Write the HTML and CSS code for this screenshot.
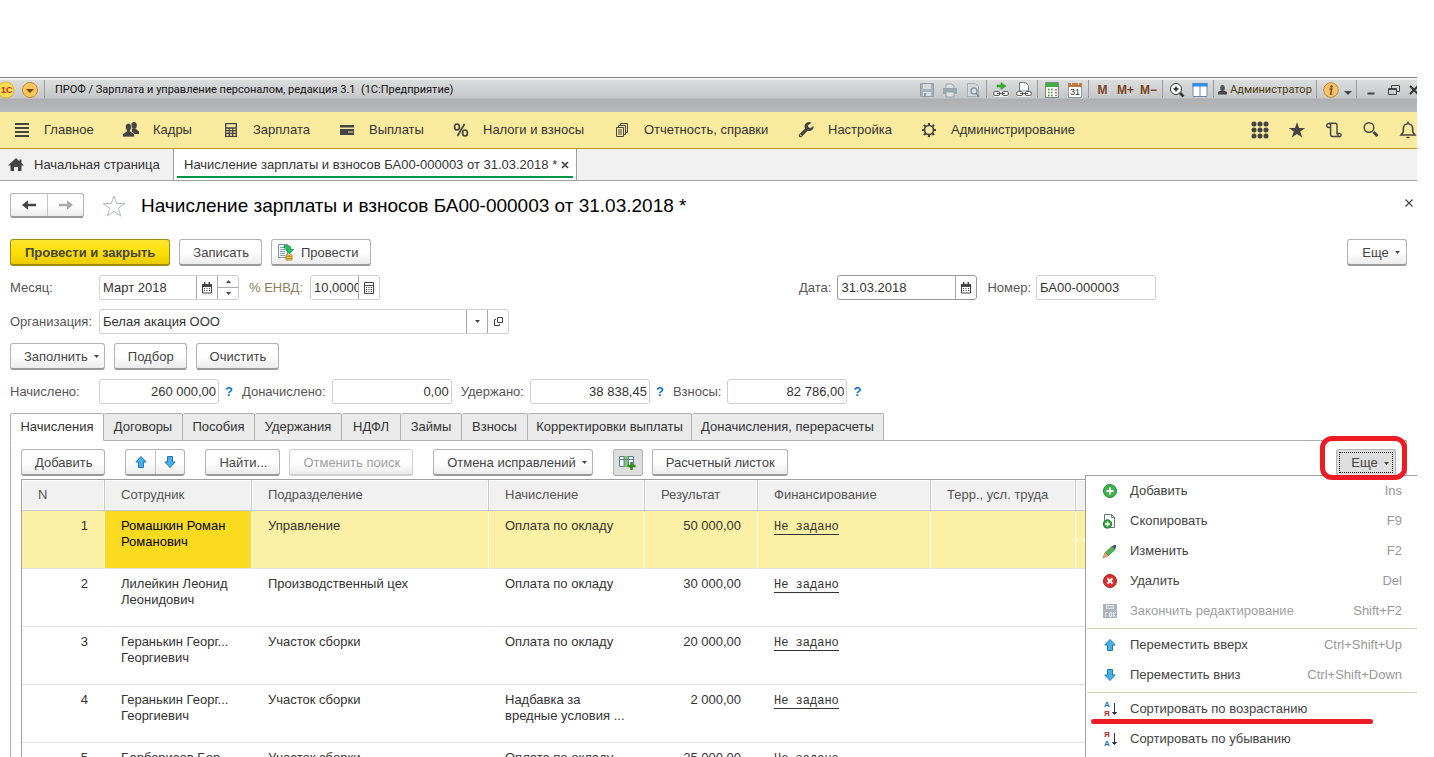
FILE: index.html
```html
<!DOCTYPE html>
<html lang="ru">

<head>
  <meta charset="UTF-8">
  <meta name="viewport" content="width=device-width, initial-scale=1.0">
  <title>Начисление зарплаты и взносов</title>
  <link rel="stylesheet" href="styles.css">
</head>

<body>
  <svg class="sprite" aria-hidden="true">
    <symbol id="up" viewBox="0 0 16 16">
      <path d="M8 2.500 13.200 8H10.500V13.500H5.500V8H2.800Z" fill="#45b0ec" stroke="#2477b0" />
    </symbol>
    <symbol id="down" viewBox="0 0 16 16">
      <path d="M8 13.500 13.200 8H10.500V2.500H5.500V8H2.800Z" fill="#45b0ec" stroke="#2477b0" />
    </symbol>
    <symbol id="calendar" viewBox="0 0 10 12">
      <path d="M.5 2.500h9v8.500h-9z" fill="#fff" stroke="#444" />
      <path d="M0 2h10v3H0zM2 0h1.500v2H2zM6.500 0H8v2H6.500z" fill="#444" />
      <path d="M2 6.500h6M2 8.500h6" stroke="#444" stroke-dasharray="1 1.500" />
    </symbol>
    <symbol id="calc" viewBox="0 0 10 12">
      <path d="M.5.5h9v11h-9zM.5 3.500h9" fill="none" stroke="#444" />
      <path d="M2 5.500h6M2 7.500h6M2 9.500h6" stroke="#444" stroke-dasharray="1.200 1.200" />
    </symbol>
    <symbol id="caret" viewBox="0 0 5 3">
      <path d="M0 0h5L2.500 3z" fill="#444" />
    </symbol>
  </svg>

  <div class="window">
    <header class="titlebar">
      <svg class="logo" width="42" height="20" viewBox="0 0 42 20">
        <circle cx="6" cy="10" r="8" fill="#ffe14d" stroke="#e0b13a" />
        <text x="1" y="13" class="logo-text">1С</text>
        <circle cx="30" cy="10" r="7.500" fill="#fbc45c" stroke="#c78a2c" />
        <path d="M26 9h8l-4 4z" fill="#6b4712" />
      </svg>
      <i class="sep"></i>
      <span class="title-text">ПРОФ / Зарплата и управление персоналом, редакция 3.1&nbsp; (1С:Предприятие)</span>
      <div class="tools">
        <button class="tool" aria-label="Сохранить"><svg width="16" height="16" viewBox="0 0 16 16"><path d="M1.500 1.500h13v13h-13z" fill="#a9b5be" stroke="#8f9ca6" /><path d="M4 2h8v5H4zM4 10h8v4H4z" fill="#d5dade" /><path d="M5 11h2v3H5z" fill="#8f9ca6" /></svg></button>
        <button class="tool" aria-label="Печать"><svg width="16" height="16" viewBox="0 0 16 16"><path d="M4 2h6l2 2v3H4z" fill="#dde1e4" stroke="#9aa6ae" /><path d="M1 6h14v6H1z" fill="#9aa8b2" /><path d="M4 10h8v5H4z" fill="#dde1e4" stroke="#9aa6ae" /></svg></button>
        <button class="tool" aria-label="Просмотр"><svg width="16" height="16" viewBox="0 0 16 16"><path d="M2.500 1.500h8l3 3v10h-11z" fill="#d3d9dd" stroke="#a3aeb6" /><circle cx="9" cy="9" r="3" fill="#dfe4e7" stroke="#8796a1" stroke-width="1.500" /><path d="m11 11 3 4" stroke="#8796a1" stroke-width="2" /></svg></button>
        <i class="sep"></i>
        <button class="tool" aria-label="Ссылка"><svg width="16" height="16" viewBox="0 0 16 16"><path d="M4 3h4V.5L13 4 8 7.500V5H4z" fill="#36b52c" stroke="#1c8718" stroke-width=".5" /><path d="M1 9h14v6H1z" fill="#e9ebec" /><rect x=".7" y="9.500" width="6" height="4" rx="1.500" fill="#fff" stroke="#555" /><rect x="9.300" y="9.500" width="6" height="4" rx="1.500" fill="#fff" stroke="#555" /><path d="M4 11.500h8" stroke="#555" /></svg></button>
        <button class="tool" aria-label="Перейти по ссылке"><svg width="16" height="16" viewBox="0 0 16 16"><path d="M3.500.5h6l3 3V9h-9z" fill="#fff" stroke="#6c7c8a" /><path d="M1 9h14v6H1z" fill="#e9ebec" /><rect x=".7" y="9.500" width="6" height="4" rx="1.500" fill="#fff" stroke="#555" /><rect x="9.300" y="9.500" width="6" height="4" rx="1.500" fill="#fff" stroke="#555" /><path d="M4 11.500h8" stroke="#555" /></svg></button>
        <i class="sep"></i>
        <button class="tool" aria-label="Калькулятор"><svg width="14" height="16" viewBox="0 0 14 16"><path d="M.5.5h13v15H.5z" fill="#f4f4f0" stroke="#7b8a7b" /><path d="M1 1h12v4H1z" fill="#3fae49" /><path d="M3 7.500h5M3 10.500h5M3 13.500h5" stroke="#4b8a50" stroke-width="1.500" stroke-dasharray="1.500 1.500" /><path d="M11 7v7" stroke="#c44" stroke-width="1.500" stroke-dasharray="1.500 1.500" /></svg></button>
        <button class="tool" aria-label="Календарь"><svg width="14" height="16" viewBox="0 0 14 16"><path d="M.5 1.500h13v14H.5z" fill="#fff" stroke="#8b98a5" /><path d="M0 1h14v4H0z" fill="#c7753f" /><path d="M3 0h1v3H3zM10 0h1v3h-1z" fill="#fff" /><text x="2" y="13" class="day">31</text></svg></button>
        <i class="sep"></i>
        <button class="tool mem">M</button>
        <button class="tool mem">M+</button>
        <button class="tool mem">M−</button>
        <i class="sep"></i>
        <button class="tool" aria-label="Масштаб"><svg width="16" height="16" viewBox="0 0 16 16"><circle cx="7" cy="7" r="5.500" fill="#fff" stroke="#333" /><path d="M4.500 7h5M7 4.500v5" stroke="#222" stroke-width="1.500" /><path d="m11 11 3.500 3.500" stroke="#333" stroke-width="2.500" /></svg></button>
        <button class="tool" aria-label="Панели"><svg width="16" height="16" viewBox="0 0 16 16"><path d="M1 1.500h14v13H1z" fill="#fff" stroke="#6d8ba8" /><path d="M.5 1h15v3.500H.5z" fill="#2f8fe0" /><path d="M8 4v10" stroke="#6d8ba8" /></svg></button>
        <i class="sep"></i>
        <button class="tool user"><svg width="9" height="10" viewBox="0 0 9 10"><ellipse cx="4.500" cy="3" rx="2.300" ry="3" fill="#555" /><path d="M0 9.500V7l3-1.500h3L9 7v2.500z" fill="#444" /></svg>Администратор</button>
        <i class="sep"></i>
        <button class="tool" aria-label="Информация"><svg width="16" height="16" viewBox="0 0 16 16"><circle cx="8" cy="8" r="7.300" fill="#f6c36c" stroke="#c58a34" /><circle cx="8.500" cy="4.500" r="1.300" fill="#7a4b12" /><path d="M6.500 7h2.200l-1 5h1.500" fill="none" stroke="#7a4b12" stroke-width="1.500" /></svg></button>
        <button class="tool small" aria-label="Еще"><svg width="8" height="12" viewBox="0 0 8 12"><path d="M0 7h8l-4 4z" fill="#444" /></svg></button>
        <i class="sep"></i>
        <button class="tool" aria-label="Свернуть"><svg width="12" height="12" viewBox="0 0 12 12"><path d="M2.500 9.500h7" stroke="#444" stroke-width="2" /></svg></button>
        <button class="tool" aria-label="Восстановить"><svg width="12" height="12" viewBox="0 0 12 12"><path d="M3.500 4V1.500h8v6H9M.5 4.500h8v6h-8zM.5 5.500h8" fill="none" stroke="#444" /></svg></button>
        <button class="tool cut" aria-label="Закрыть"><svg width="10" height="10" viewBox="0 0 10 10"><path d="m1 1 8 8m0-8-8 8" stroke="#333" stroke-width="2" /></svg></button>
      </div>
    </header>

    <nav class="sections">
      <a href="#"><svg viewBox="0 0 18 18"><path d="M2 3h14M2 7h14M2 11h14M2 15h14" stroke="#444" stroke-width="1.800" /></svg>Главное</a>
      <a href="#"><svg viewBox="0 0 18 18"><g fill="#444"><ellipse cx="12" cy="4.500" rx="2.800" ry="3.500" /><path d="M10 8h4l3 2.500V13h-7z" /><g stroke="#faeb9e" stroke-width=".7"><ellipse cx="6.500" cy="6" rx="3.200" ry="3.800" /><path d="M.5 16v-3l4-2.700h4l4 2.700v3z" /></g><path d="M5 8h3v4H5z" /></g></svg>Кадры</a>
      <a href="#"><svg viewBox="0 0 18 18"><path d="M3.700 2.700h10.600v12.600H3.700zM4 7h10M4 9.700h10M4 12.400h10M7.300 7v8M10.700 7v8" fill="none" stroke="#444" stroke-width="1.300" /></svg>Зарплата</a>
      <a href="#"><svg viewBox="0 0 18 18"><path d="M2 4h14v2.500H2zM2 8h14v6H2z" fill="#444" /><path d="M10 11h5" stroke="#faeb9e" /></svg>Выплаты</a>
      <a href="#"><svg viewBox="0 0 18 18"><g fill="none" stroke="#444" stroke-width="1.700"><ellipse cx="5" cy="6" rx="2.400" ry="3" /><ellipse cx="13" cy="12" rx="2.400" ry="3" /><path d="M12.500 3 5.500 15" /></g></svg>Налоги и взносы</a>
      <a href="#"><svg viewBox="0 0 18 18"><path d="M3.500 6.500h7v9h-7zM5.500 6V4.500h7v9H11M7.500 4V2.500h7v9H13M5 9h4M5 11h4M5 13h4" fill="none" stroke="#444" /></svg>Отчетность, справки</a>
      <a href="#"><svg viewBox="0 0 18 18"><path d="m3.500 14.500 7-7" stroke="#444" stroke-width="3.500" stroke-linecap="round" /><path d="M14.500 1.800a4.500 4.500 0 1 0 2 3.200l-3 2-2.200-.6-.5-2z" fill="#444" /><circle cx="3.700" cy="14.300" r=".8" fill="#faeb9e" /></svg>Настройка</a>
      <a href="#"><svg viewBox="0 0 18 18"><circle cx="9" cy="9" r="4.500" fill="none" stroke="#444" stroke-width="1.700" /><path d="M9 2v2.500M9 13.500V16M2 9h2.500M13.500 9H16M4 4l1.800 1.800M12.200 12.200 14 14M14 4l-1.800 1.800M5.800 12.200 4 14" stroke="#444" stroke-width="2.200" /></svg>Администрирование</a>
      <div class="quick">
        <button aria-label="Функции"><svg viewBox="0 0 18 18"><path d="M3 3h.01M9 3h.01M15 3h.01M3 9h.01M9 9h.01M15 9h.01M3 15h.01M9 15h.01M15 15h.01" stroke="#444" stroke-width="5" stroke-linecap="round" /></svg></button>
        <button aria-label="Избранное"><svg viewBox="0 0 18 18"><path d="m9 1 2 5.900h6.200l-5 3.700 2 6L9 13l-5.200 3.600 2-6-5-3.700H7z" fill="#444" /></svg></button>
        <button aria-label="История"><svg viewBox="0 0 18 18"><path d="M5.300 6.500H3.800a2 2 0 1 1 1.800-2.800V13.500a2 2 0 0 0 2 2h6.600M3.800 2.300H10a2 2 0 0 1 2 2V12.500M12 12.500h2.700a1.600 1.600 0 1 1-1.800 1.500z" fill="none" stroke="#444" stroke-width="1.400" /></svg></button>
        <button aria-label="Поиск"><svg viewBox="0 0 18 18"><circle cx="7" cy="6.500" r="4.800" fill="none" stroke="#444" stroke-width="1.400" /><path d="m11.500 11 4 4" stroke="#444" stroke-width="3" /></svg></button>
        <button aria-label="Оповещения"><svg viewBox="0 0 18 18"><path d="M9 .5v2M2 14h14l-2.300-3V7.500a4.700 4.700 0 0 0-9.400 0V11zM7.500 16.500h3" fill="none" stroke="#444" stroke-width="1.600" /></svg></button>
      </div>
    </nav>

    <div class="pages">
      <a class="page" href="#"><svg width="16" height="14" viewBox="0 0 16 14"><path d="M8 0 0 7.500h2.500V13H6V9h4v4h3.500V7.500H16l-2.500-2.400V1.500h-2v1.700z" fill="#444" /></svg>Начальная страница</a>
      <a class="page current" href="#"><span>Начисление зарплаты и взносов БА00-000003 от 31.03.2018 *</span><svg width="8" height="8" viewBox="0 0 8 8"><path d="m1 1 6 6m0-6L1 7" stroke="#444" stroke-width="1.700" /></svg></a>
    </div>

    <main class="form">
      <div class="heading">
        <div class="btn-pair nav">
          <button aria-label="Назад"><svg width="14" height="10" viewBox="0 0 14 10"><path d="M14 5H4" stroke="#444" stroke-width="2.500" /><path d="M0 5 6 .3v9.400z" fill="#444" /></svg></button>
          <button aria-label="Вперед"><svg width="14" height="10" viewBox="0 0 14 10"><path d="M0 5h10" stroke="#aaa" stroke-width="2.500" /><path d="M14 5 8 .3v9.400z" fill="#aaa" /></svg></button>
        </div>
        <svg class="star" width="24" height="22" viewBox="0 0 24 22"><path d="m12 1 2.700 7.500h8.200l-6.600 4.800 2.500 7.700-6.800-4.700L5.200 21l2.500-7.700L1.100 8.500h8.200z" fill="none" stroke="#b4bac0" /></svg>
        <h1>Начисление зарплаты и взносов БА00-000003 от 31.03.2018 *</h1>
        <button class="close" aria-label="Закрыть"><svg width="8" height="8" viewBox="0 0 8 8"><path d="m.5.5 7 7m0-7-7 7" stroke="#444" stroke-width="1.200" /></svg></button>
      </div>

      <div class="commands">
        <button class="btn primary">Провести и закрыть</button>
        <button class="btn">Записать</button>
        <button class="btn with-icon"><svg width="16" height="17" viewBox="0 0 16 17"><path d="M.5.5h9v13h-9z" fill="#f3f7fa" stroke="#7d93a8" /><path d="M2 3.500h4M2 5.500h5M2 7.500h5M2 9.500h5M2 11.500h5" stroke="#8fa3b5" /><path d="M6 1.500h4q3 0 3 4h2.500L11.500 10 7.500 5.500H10Q10 4 6 4z" fill="#24c267" stroke="#128a42" stroke-width=".7" /><path d="M8 11h6v5H8z" fill="#f3d25a" stroke="#b78d1c" /><path d="M8 12.700h6M8 14.400h6" stroke="#b78d1c" /></svg>Провести</button>
        <button class="btn dropdown more">Еще<svg class="caret"><use href="#caret" /></svg></button>
      </div>

      <div class="fields">
        <div class="row">
          <label class="lead" for="month">Месяц:</label>
          <div class="box month"><input id="month" value="Март 2018"><button aria-label="Выбрать месяц"><svg width="10" height="12"><use href="#calendar" /></svg></button><div class="spin"><button aria-label="Больше"><svg width="5" height="3" viewBox="0 0 5 3"><path d="M0 3h5L2.500 0z" fill="#444" /></svg></button><button aria-label="Меньше"><svg width="5" height="3" viewBox="0 0 5 3"><path d="M0 0h5L2.500 3z" fill="#444" /></svg></button></div></div>
          <label class="envd" for="envd">% ЕНВД:</label>
          <div class="box percent"><input id="envd" value="10,0000"><button aria-label="Калькулятор"><svg width="10" height="12"><use href="#calc" /></svg></button></div>
        </div>
        <div class="row">
          <label for="date">Дата:</label>
          <div class="box date"><input id="date" value="31.03.2018"><button aria-label="Выбрать дату"><svg width="10" height="12"><use href="#calendar" /></svg></button></div>
          <label class="number-label" for="number">Номер:</label>
          <div class="box sum"><input id="number" value="БА00-000003"></div>
        </div>
      </div>

      <div class="row">
        <label class="lead" for="org">Организация:</label>
        <div class="box org"><input id="org" value="Белая акация ООО"><button aria-label="Список"><svg class="drop"><use href="#caret" /></svg></button><button aria-label="Открыть"><svg width="9" height="9" viewBox="0 0 9 9"><path d="M3.500.5h5v5h-5zM2 2.500H.5v6h5V7" fill="none" stroke="#444" /></svg></button></div>
      </div>

      <div class="commands">
        <button class="btn dropdown">Заполнить<svg class="caret"><use href="#caret" /></svg></button>
        <button class="btn">Подбор</button>
        <button class="btn">Очистить</button>
      </div>

      <div class="row totals">
        <label class="lead" for="t1">Начислено:</label>
        <div class="box sum right"><input id="t1" value="260 000,00"></div>
        <a class="help" href="#">?</a>
        <label for="t2">Доначислено:</label>
        <div class="box sum right"><input id="t2" value="0,00"></div>
        <label class="after" for="t3">Удержано:</label>
        <div class="box sum right"><input id="t3" value="38 838,45"></div>
        <a class="help" href="#">?</a>
        <label for="t4">Взносы:</label>
        <div class="box sum right"><input id="t4" value="82 786,00"></div>
        <a class="help" href="#">?</a>
      </div>

      <div class="tabs">
        <button class="tab active">Начисления</button>
        <button class="tab">Договоры</button>
        <button class="tab">Пособия</button>
        <button class="tab">Удержания</button>
        <button class="tab">НДФЛ</button>
        <button class="tab">Займы</button>
        <button class="tab">Взносы</button>
        <button class="tab">Корректировки выплаты</button>
        <button class="tab">Доначисления, перерасчеты</button>
      </div>

      <section class="panel">
        <div class="toolbar">
          <button class="btn">Добавить</button>
          <div class="btn-pair move">
            <button aria-label="Вверх"><svg width="16" height="16"><use href="#up" /></svg></button>
            <button aria-label="Вниз"><svg width="16" height="16"><use href="#down" /></svg></button>
          </div>
          <button class="btn">Найти...</button>
          <button class="btn" disabled>Отменить поиск</button>
          <button class="btn dropdown fix">Отмена исправлений<svg class="caret"><use href="#caret" /></svg></button>
          <button class="btn pressed columns" aria-label="Колонки"><svg width="17" height="15" viewBox="0 0 17 15"><path d="M.5 1.500h14v10H.5z" fill="#fff" stroke="#5a7f99" /><path d="M5 1h4.500v11H5z" fill="#7fc46b" /><path d="M0 4.500h15M5 1v11M9.500 1v11" stroke="#5a7f99" /><path d="M12.500 7v8M8.500 11h8" stroke="#2f8a1d" stroke-width="2.500" /></svg></button>
          <button class="btn">Расчетный листок</button>

          <div class="more-wrap">
            <button class="btn dropdown pressed more focused">Еще<svg class="caret"><use href="#caret" /></svg></button>
            <div class="menu">
              <button><svg viewBox="0 0 16 16"><circle cx="8" cy="8" r="6.500" fill="#3cb54a" stroke="#258a33" /><path d="M8 4.500v7M4.500 8h7" stroke="#fff" stroke-width="2" /></svg>Добавить<kbd>Ins</kbd></button>
              <button><svg viewBox="0 0 16 16"><path d="M2.500 1.500h7l3 3v10h-10z" fill="#fff" stroke="#66788a" /><path d="M9.500 1.500v3h3" fill="none" stroke="#66788a" /><circle cx="5.500" cy="11" r="4.200" fill="#34a544" stroke="#1f7d2d" /><path d="M5.500 8.500v5M3 11h5" stroke="#fff" stroke-width="1.500" /></svg>Скопировать<kbd>F9</kbd></button>
              <button><svg viewBox="0 0 16 16"><path d="m3.500 9.500 6.500-6L13 6.500 6.500 12.500z" fill="#4fb356" stroke="#3a6b3a" stroke-width=".7" /><path d="M10 3.500 12 2h2v2l-1 2.500z" fill="#3d5064" /><path d="m1 15 2-5.500 3.500 3z" fill="#e8b266" stroke="#8a6332" stroke-width=".6" /></svg>Изменить<kbd>F2</kbd></button>
              <button><svg viewBox="0 0 16 16"><circle cx="8" cy="8" r="6.500" fill="#dc3030" stroke="#a81c1c" /><path d="m5.500 5.500 5 5m0-5-5 5" stroke="#fff" stroke-width="2" /></svg>Удалить<kbd>Del</kbd></button>
              <button disabled><svg viewBox="0 0 16 16"><path d="M1 1h14v14H1z" fill="#aab4bd" /><path d="M4 2h8v4H4z" fill="#dfe3e7" /><path d="M5 4h6" stroke="#98a3ad" /><path d="M3.500 14V9.500H6M7.500 9.500h2v4h-2zM11.500 9v5M14 9l-2.500 2.500L14 14" fill="none" stroke="#e8ebee" /></svg>Закончить редактирование<kbd>Shift+F2</kbd></button>
              <hr>
              <button><svg viewBox="0 0 16 16"><use href="#up" /></svg>Переместить вверх<kbd>Ctrl+Shift+Up</kbd></button>
              <button><svg viewBox="0 0 16 16"><use href="#down" /></svg>Переместить вниз<kbd>Ctrl+Shift+Down</kbd></button>
              <hr>
              <button class="marked"><svg viewBox="0 0 16 16"><text x="2" y="6" class="az blue">А</text><text x="2" y="15" class="az red">Я</text><path d="M12.500 2v11M10.500 11.500l2 2 2-2z" fill="#333" stroke="#333" /></svg>Сортировать по возрастанию</button>
              <button><svg viewBox="0 0 16 16"><text x="2" y="6" class="az red">Я</text><text x="2" y="15" class="az blue">А</text><path d="M12.500 2v11M10.500 11.500l2 2 2-2z" fill="#333" stroke="#333" /></svg>Сортировать по убыванию</button>
            </div>
            <i class="ring"></i>
          </div>
        </div>

        <table>
          <colgroup>
            <col class="c-num">
            <col class="c-name">
            <col class="c-dept">
            <col class="c-kind">
            <col class="c-sum">
            <col class="c-fin">
            <col class="c-terr">
            <col>
          </colgroup>
          <thead>
            <tr>
              <th>N</th>
              <th>Сотрудник</th>
              <th>Подразделение</th>
              <th>Начисление</th>
              <th>Результат</th>
              <th>Финансирование</th>
              <th>Терр., усл. труда</th>
              <th></th>
            </tr>
          </thead>
          <tbody>
            <tr class="selected">
              <td class="num">1</td>
              <td class="cell-active">Ромашкин Роман<br>Романович</td>
              <td>Управление</td>
              <td>Оплата по окладу</td>
              <td class="num">50 000,00</td>
              <td><a href="#">Не задано</a></td>
              <td></td>
              <td class="split"><div></div></td>
            </tr>
            <tr>
              <td class="num">2</td>
              <td>Лилейкин Леонид<br>Леонидович</td>
              <td>Производственный цех</td>
              <td>Оплата по окладу</td>
              <td class="num">30 000,00</td>
              <td><a href="#">Не задано</a></td>
              <td></td>
              <td></td>
            </tr>
            <tr>
              <td class="num">3</td>
              <td>Геранькин Георг...<br>Георгиевич</td>
              <td>Участок сборки</td>
              <td>Оплата по окладу</td>
              <td class="num">20 000,00</td>
              <td><a href="#">Не задано</a></td>
              <td></td>
              <td></td>
            </tr>
            <tr>
              <td class="num">4</td>
              <td>Геранькин Георг...<br>Георгиевич</td>
              <td>Участок сборки</td>
              <td>Надбавка за<br>вредные условия ...</td>
              <td class="num">2 000,00</td>
              <td><a href="#">Не задано</a></td>
              <td></td>
              <td></td>
            </tr>
            <tr>
              <td class="num">5</td>
              <td>Барбарисов Бор...</td>
              <td>Участок сборки</td>
              <td>Оплата по окладу</td>
              <td class="num">25 000,00</td>
              <td><a href="#">Не задано</a></td>
              <td></td>
              <td></td>
            </tr>
          </tbody>
        </table>
      </section>
    </main>
  </div>
</body>

</html>
```

FILE: styles.css
```css
* {
  margin: 0;
  padding: 0;
  box-sizing: border-box;
}

body {
  height: 100vh;
  overflow: hidden;
  padding: 77px 17px 0 0;
  background: #fff;
  color: #333;
  font: 13px/16px "Liberation Sans", Arial, sans-serif;
}

button,
input {
  font: inherit;
  color: inherit;
  border: 0;
  background: none;
}

a {
  color: inherit;
  text-decoration: none;
}

svg {
  flex: none;
}

.sprite {
  position: absolute;
  width: 0;
  height: 0;
}

/* window title */
.titlebar {
  display: flex;
  align-items: flex-start;
  height: 35px;
  padding-top: 2px;
  overflow: hidden;
  border-top: 1px solid #808080;
  background: linear-gradient(#fff 1px, #dcdddd 2px, #c6c7c9 20px, #aeafb2 21px, #b9babb 34px);
  color: #111;
  font: 11px/20px Roboto, Tahoma, sans-serif;
}

.logo-text {
  font: bold 9px "Liberation Sans", sans-serif;
  fill: #d8201c;
}

.sep {
  width: 1px;
  height: 18px;
  margin: 0 2px;
  background: #9a9b9d;
}

.title-text {
  margin-left: 8px;
  white-space: nowrap;
}

.tools {
  display: flex;
  margin-left: auto;
}

.tool {
  display: flex;
  align-items: center;
  justify-content: center;
  width: 23px;
  height: 20px;
}

.mem {
  color: #7b4422;
  font: bold 12px "Liberation Sans", sans-serif;
}

.user {
  width: 98px;
  gap: 3px;
  color: #4a3a10;
}

.small {
  width: 12px;
}

.cut {
  width: 12px;
  justify-content: flex-start;
  padding-left: 4px;
}

.day {
  font: 9px "Liberation Sans", sans-serif;
  fill: #333;
}

/* sections */
.sections {
  display: grid;
  grid-template-columns: 109px 100px 116px 114px 161px 184px 123px 160px 1fr;
  align-items: center;
  height: 37px;
  padding-left: 13px;
  overflow: hidden;
  border-bottom: 1px solid #b79c1c;
  background: #faeb9e;
}

.sections a {
  display: flex;
  align-items: center;
  gap: 13px;
}

.sections svg {
  width: 18px;
  height: 18px;
}

.quick {
  display: flex;
  justify-content: flex-end;
  margin-right: -9px;
}

.quick button {
  display: flex;
  align-items: center;
  justify-content: center;
  width: 37px;
  height: 36px;
}

/* open pages */
.pages {
  display: flex;
  height: 32px;
  border-bottom: 1px solid #a0a0a0;
  background: #f1f1f1;
}

.page {
  display: flex;
  align-items: center;
  gap: 10px;
  width: 174px;
  padding-left: 8px;
  border-right: 1px solid #a0a0a0;
  white-space: nowrap;
}

.page.current {
  justify-content: space-between;
  gap: 4px;
  width: 403px;
  padding: 0 8px 0 10px;
  background: linear-gradient(#009646, #009646) 3px 27px / 396px 2px no-repeat #fff;
}

/* document form */
.form {
  padding: 12px 10px 0;
}

.heading {
  display: flex;
  align-items: center;
  height: 26px;
  margin-bottom: 20px;
}

.heading h1 {
  margin-left: 15px;
  color: #000;
  font-size: 19px;
  font-weight: normal;
  line-height: 26px;
}

.star {
  margin-left: 18px;
}

.close {
  align-self: flex-start;
  width: 16px;
  height: 16px;
  margin: 2px -10px 0 auto;
}

.btn,
.btn-pair {
  display: flex;
  align-items: center;
  justify-content: center;
  height: 27px;
  border: 1px solid #b3b3b3;
  border-bottom: 2px solid #999;
  border-radius: 3px;
  background: linear-gradient(#fff 50%, #ececec);
  color: #444;
  white-space: nowrap;
}

.btn {
  padding: 1px 12px 0 13px;
}

.btn:disabled {
  border-color: #d0d0d0;
  color: #a0a0a0;
}

.btn.primary {
  padding: 1px 14px 0;
  border-color: #a08c10;
  background: linear-gradient(#ffe733, #ffe000 50%, #eccb00);
  font-weight: bold;
}

.btn.with-icon {
  gap: 7px;
  padding-left: 6px;
}

.btn.dropdown {
  padding-right: 5px;
}

.btn.pressed {
  border-bottom: 1px solid #a0a0a0;
  background: #dedede;
}

.btn-pair button {
  display: flex;
  align-items: center;
  justify-content: center;
  width: 50%;
  height: 100%;
}

.btn-pair button + button {
  border-left: 1px solid #c4c4c4;
}

.btn-pair.nav {
  align-self: flex-start;
  width: 74px;
  height: 25px;
}

.caret {
  width: 5px;
  height: 3px;
  margin-left: 6px;
}

.more {
  width: 60px;
  margin-left: auto;
}

.commands {
  display: flex;
  gap: 9px;
  margin-bottom: 9px;
}

.fields {
  display: grid;
  grid-template-columns: 789px 1fr;
}

.row {
  display: flex;
  align-items: center;
  height: 25px;
  margin-bottom: 9px;
  color: #555;
}

.lead {
  width: 89px;
}

.box {
  display: flex;
  height: 25px;
  overflow: hidden;
  border: 1px solid #d0d0d0;
  border-radius: 3px;
  background: #fff;
  color: #333;
}

.box input {
  flex: 1;
  min-width: 0;
  padding-left: 3px;
  outline: 0;
}

.box > button {
  display: flex;
  align-items: center;
  justify-content: center;
  width: 21px;
  border-left: 1px solid #a8a8a8;
}

.spin {
  display: flex;
  flex-direction: column;
  width: 21px;
  border-left: 1px solid #a8a8a8;
}

.spin button {
  display: flex;
  flex: 1;
  align-items: center;
  justify-content: center;
}

.spin button + button {
  border-top: 1px solid #a8a8a8;
}

.month {
  width: 140px;
}

.envd {
  width: 61px;
  margin-left: 10px;
  color: #8a7f60;
}

.percent {
  width: 70px;
}

.date {
  width: 140px;
  margin-left: 6px;
  border-color: #999;
}

.number-label {
  margin: 0 5px 0 10px;
}

.sum {
  width: 120px;
}

.org {
  width: 410px;
}

.drop {
  width: 5px;
  height: 3px;
}

.totals label:not(.lead) {
  margin-right: 6px;
}

.totals .after {
  margin-left: 9px;
}

.right input {
  padding-right: 2px;
  text-align: right;
}

.help {
  width: 23px;
  padding-left: 6px;
  color: #1078c0;
  font-weight: bold;
}

/* tabs */
.tabs {
  position: relative;
  display: grid;
  grid-template-columns: 94px 79px 72px 87px 59px 61px 66px 164px 192px;
  margin-bottom: -1px;
}

.tab {
  height: 28px;
  border: 1px solid #b0b0b0;
  border-left: 0;
  border-radius: 2px 2px 0 0;
  background: #eaeaea;
  white-space: nowrap;
}

.tab.active {
  border-left: 1px solid #b0b0b0;
  border-bottom-color: #fff;
  background: #fff;
}

.panel {
  padding: 8px 10px 0;
  border: 1px solid #b0b0b0;
  border-bottom: 0;
}

.toolbar {
  display: flex;
  gap: 9px;
  margin-bottom: 3px;
}

.move {
  width: 60px;
  margin: 0 11px;
}

.fix {
  margin-left: 11px;
}

.columns {
  width: 30px;
  margin-left: 11px;
  padding: 0;
}

.more-wrap {
  position: relative;
  margin-left: auto;
}

.focused {
  outline: 1px dotted #000;
  outline-offset: -4px;
}

.ring {
  position: absolute;
  top: -13px;
  right: -11px;
  width: 87px;
  height: 44px;
  border: 5px solid #ed1c24;
  border-radius: 12px;
}

.menu {
  position: absolute;
  top: 26px;
  right: -21px;
  width: 332px;
  height: 320px;
  border: 1px solid #a0a0a0;
  border-right: 0;
  background: #fff;
}

.menu button {
  display: flex;
  align-items: center;
  width: 100%;
  height: 30px;
  padding: 0 15px 0 16px;
  color: #444;
}

.menu button:disabled {
  color: #a0a0a0;
}

.menu svg {
  width: 16px;
  height: 16px;
  margin-right: 12px;
  overflow: visible;
}

.menu kbd {
  margin-left: auto;
  color: #999;
  font: inherit;
}

.menu hr {
  margin: 2px 0 1px 1px;
  border: 0;
  border-top: 1px solid #d6d0b8;
}

.marked {
  position: relative;
}

.marked::after {
  content: '';
  position: absolute;
  left: 5px;
  bottom: 0;
  width: 282px;
  height: 5px;
  border-radius: 3px;
  background: #ed1c24;
}

.az {
  font: bold 8px "Liberation Sans", sans-serif;
}

.blue {
  fill: #1f77bd;
}

.red {
  fill: #b8262b;
}

/* accruals */
table {
  width: 100%;
  table-layout: fixed;
  border: 1px solid #a0a0a0;
  border-spacing: 0;
}

th {
  height: 31px;
  padding: 0 16px;
  border-right: 1px solid #c8c8c8;
  border-bottom: 1px solid #c8c8c8;
  background: #f1f1f1;
  box-shadow: inset 0 0 0 1px #fff;
  color: #555;
  font-weight: normal;
  text-align: left;
  white-space: nowrap;
}

td {
  height: 58px;
  padding: 7px 16px 0;
  border-right: 1px solid #fff;
  border-bottom: 1px solid #e2e2e2;
  vertical-align: top;
  white-space: nowrap;
}

td a {
  border-bottom: 1px solid #333;
  font: 12px/12px "Liberation Mono", "Courier New", monospace;
}

.num {
  text-align: right;
}

.selected td {
  background: #fcf0a4;
}

.selected .cell-active {
  background: #fbdb20;
  color: #000;
}

.selected .split {
  padding: 0;
}

.split div {
  height: 29px;
  border-bottom: 1px solid #fff;
}

.c-num {
  width: 83px;
}

.c-name {
  width: 147px;
}

.c-dept {
  width: 237px;
}

.c-kind {
  width: 156px;
}

.c-sum {
  width: 113px;
}

.c-fin {
  width: 173px;
}

.c-terr {
  width: 145px;
}
```
